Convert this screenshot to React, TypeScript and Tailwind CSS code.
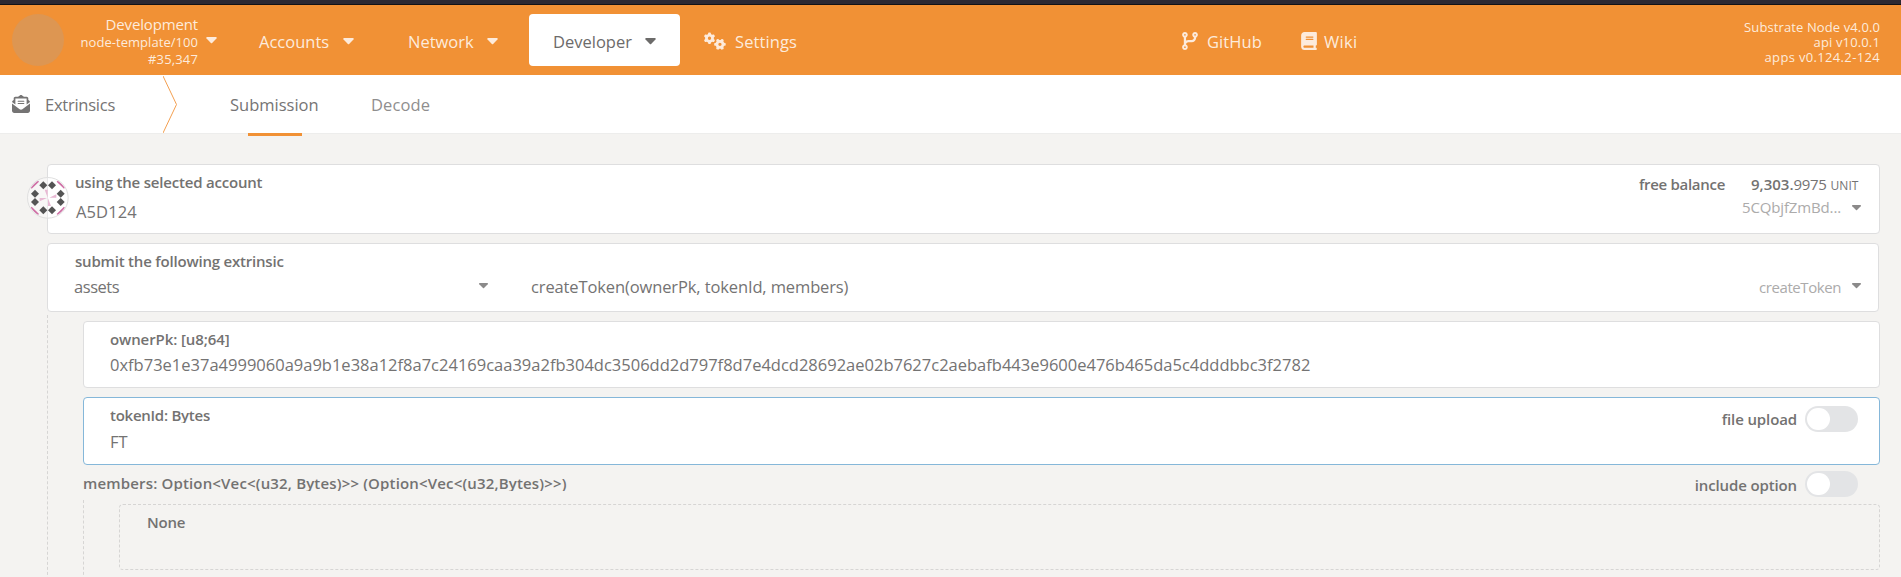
import type { ReactNode } from "react";
import { FaBook, FaCodeBranch, FaEnvelopeOpenText, FaGears } from "react-icons/fa6";

const HEX =
  "0xfb73e1e37a4999060a9a9b1e38a12f8a7c24169caa39a2fb304dc3506dd2d797f8d7e4dcd28692ae02b7627c2aebafb443e9600e476b465da5c4dddbbc3f2782";

function Caret({ className = "" }: { className?: string }) {
  return (
    <svg viewBox="0 0 12 8" className={`shrink-0 ${className}`} fill="currentColor" aria-hidden="true">
      <path d="M1 0h10c.9 0 1.3 1 .7 1.7l-5 5.1c-.4.4-1 .4-1.4 0l-5-5.1C-.3 1 .1 0 1 0z" />
    </svg>
  );
}

function Label({ className = "", children }: { className?: string; children: ReactNode }) {
  return (
    <span className={`block whitespace-nowrap text-[15px] leading-5 font-semibold text-[#737271] ${className}`}>
      {children}
    </span>
  );
}

function Value({ className = "", children }: { className?: string; children: ReactNode }) {
  return (
    <span className={`block whitespace-nowrap text-[16.5px] leading-6 text-[#747373] ${className}`}>{children}</span>
  );
}

function Toggle() {
  return (
    <span className="flex h-[26px] w-[53px] shrink-0 items-center rounded-full bg-[#e3e4e6] pl-0.5">
      <span className="h-[22px] w-[23px] rounded-full bg-white" />
    </span>
  );
}

function Identicon() {
  const diamonds = [
    [49, 25],
    [75, 25],
    [101, 50],
    [101, 75],
    [75, 100],
    [49, 100],
    [24, 75],
    [24, 50],
  ];
  return (
    <svg viewBox="0 0 126 126" className="h-[42px] w-[42px]" aria-hidden="true">
      <clipPath id="identicon-disc">
        <circle cx="62.5" cy="62.5" r="59" />
      </clipPath>
      <circle cx="62.5" cy="62.5" r="61" fill="#ffffff" fillOpacity="0.35" stroke="#dfdfdf" strokeWidth="3" />
      <g stroke="#cf70a6" strokeWidth="6" clipPath="url(#identicon-disc)">
        <path d="M12 33L34 12M91 12l22 21M12 91l22 22M91 113l22-22" />
      </g>
      <g fill="#e8b8d3">
        <path d="M53 38l9 0v24zM88 52v10H67zM72 87h-9V64zM38 73V63h22z" />
      </g>
      <g fill="#545454">
        {diamonds.map(([x, y]) => (
          <path key={`${x}-${y}`} d={`M${x} ${y - 12}l12 12-12 12-12-12z`} />
        ))}
      </g>
    </svg>
  );
}

function Header() {
  return (
    <header className="flex h-[70px] items-start bg-[#f19135] text-[16.5px] leading-6 text-[#fdebdc]">
      <div className="mt-[9px] ml-[12px] size-[52px] shrink-0 rounded-full bg-[#dd9652]" />
      <div className="mt-[9px] flex w-[134px] flex-col items-end whitespace-nowrap">
        <span className="text-[15px] leading-5 tracking-[-0.15px]">Development</span>
        <span className="text-[13px] leading-[17px] tracking-[0.05px]">node-template/100</span>
        <span className="text-[13px] leading-[17px] tracking-[0.15px]">#35,347</span>
      </div>
      <Caret className="mt-[32px] ml-2 h-[7px] w-[11px]" />

      <nav className="flex whitespace-nowrap">
        <span className="mt-[25px] ml-[42px] w-[84px]">Accounts</span>
        <Caret className="mt-[33px] h-[7px] w-[11px]" />
        <span className="mt-[25px] ml-[54px] w-[79px]">Network</span>
        <Caret className="mt-[33px] h-[7px] w-[11px]" />
        <span className="mt-[9px] ml-[31px] flex h-[52px] w-[151px] rounded bg-white text-[#6c6b6a]">
          <span className="mt-[16px] ml-[24px] w-[92px]">Developer</span>
          <Caret className="mt-[24px] h-[7px] w-[11px]" />
        </span>
        <FaGears className="mt-[27px] ml-[24px] h-[18px] w-[22px]" />
        <span className="mt-[25px] ml-[9px] tracking-[0.1px]">Settings</span>
      </nav>

      <div className="ml-auto flex w-[719px] whitespace-nowrap">
        <FaCodeBranch className="mt-[27px] h-[18px] w-4" />
        <span className="mt-[25px] ml-[9px] w-[94px] tracking-[0.1px]">GitHub</span>
        <FaBook className="mt-[27px] h-[18px] w-4" />
        <span className="mt-[25px] ml-[7px] tracking-[0.3px]">Wiki</span>
        <div className="mt-[14.5px] mr-[21px] ml-auto flex flex-col items-end text-[13px] leading-[15px]">
          <span className="tracking-[0.11px]">Substrate Node v4.0.0</span>
          <span className="tracking-[0.14px]">api v10.0.1</span>
          <span className="tracking-[0.34px]">apps v0.124.2-124</span>
        </div>
      </div>
    </header>
  );
}

function Tabs() {
  return (
    <div className="flex h-[59px] items-start border-b border-[#ededec] bg-white text-[16.5px] leading-6 whitespace-nowrap text-[#757474]">
      <FaEnvelopeOpenText className="mt-[20px] ml-[12px] size-[18px]" />
      <span className="mt-[18px] ml-[15px] w-[118px] tracking-[-0.25px]">Extrinsics</span>
      <svg viewBox="0 0 15 58" className="h-[58px] w-[15px]" fill="none" stroke="#f39f50" aria-hidden="true">
        <path d="M0 1L13.5 29.5L0 58" />
      </svg>
      <div className="relative ml-[52px]">
        <span className="mt-[18px] block w-[141px]">Submission</span>
        <span className="absolute top-[58px] left-[18px] h-[3px] w-[54px] bg-[#f19135]" />
      </div>
      <span className="mt-[18px] tracking-[0.1px] text-[#8f8e8e]">Decode</span>
    </div>
  );
}

export default function App() {
  return (
    <div className="h-[577px] w-[1901px] overflow-hidden bg-[#f4f3f1] font-['Open_Sans',sans-serif]">
      <div className="h-[5px] border-b border-[#131217] bg-[#2c2933]" />
      <Header />
      <Tabs />

      <main className="pt-[30px] pr-[21px] pl-[47px]">
        <section className="relative flex h-[70px] justify-between rounded border border-[#dededf] bg-white">
          <div className="absolute top-[12px] -left-[21px]">
            <Identicon />
          </div>
          <div className="pt-[7px] pl-[26px]">
            <Label className="pl-px tracking-[-0.2px]">using the selected account</Label>
            <Value className="mt-[8px] ml-[2px] tracking-[0.1px]">A5D124</Value>
          </div>
          <div className="pt-[9px] pr-5">
            <div className="flex justify-end">
              <Label className="mr-[26px] tracking-[-0.3px]">free balance</Label>
              <span className="flex w-[108px] items-baseline text-[15px] leading-5 whitespace-nowrap text-[#747373]">
                <span className="font-semibold text-[#737271]">9,303.</span>
                <span className="tracking-[-0.3px]">9975</span>
                <span className="ml-1 text-[12px]">UNIT</span>
              </span>
            </div>
            <div className="flex items-start justify-end pt-px text-[15px] leading-5 text-[#acabab]">
              <span className="tracking-[-0.14px]">5CQbjfZmBd...</span>
              <Caret className="mt-[8px] -mr-[2px] ml-[11px] h-[6px] w-[9px] text-[#8b8a8a]" />
            </div>
          </div>
        </section>

        <section className="mt-[9px] mr-px flex h-[69px] flex-col rounded border border-[#dededf] bg-white pt-[7px] pl-[26px]">
          <Label className="pl-px tracking-[-0.2px]">submit the following extrinsic</Label>
          <div className="mt-1 flex items-start">
            <Value className="w-[405px] tracking-[-0.45px]">assets</Value>
            <Caret className="mt-[8px] h-[6px] w-[9px] text-[#8b8a8a]" />
            <Value className="ml-[43px] tracking-[-0.12px]">createToken(ownerPk, tokenId, members)</Value>
            <span className="ml-auto text-[15px] leading-6 tracking-[-0.42px] text-[#acabab]">createToken</span>
            <Caret className="mt-[8px] mr-[17px] ml-[11px] h-[6px] w-[9px] text-[#8b8a8a]" />
          </div>
        </section>

        <div className="mt-[3px] h-[270px] border-l border-dashed border-[#d6d5d4] pt-[6px] pl-[35px]">
          <section className="h-[67px] rounded border border-[#dededf] bg-white pt-[7px] pl-[26px]">
            <Label className="h-[18px] overflow-hidden tracking-[-0.1px]">ownerPk: [u8;64]</Label>
            <Value className="mt-[6px]">{HEX}</Value>
          </section>

          <section className="mt-[9px] flex h-[68px] justify-between rounded border border-[#85b7d9] bg-white pr-[21px] pl-[26px]">
            <div className="pt-[7px]">
              <Label className="h-[18px] overflow-hidden tracking-[-0.26px]">tokenId: Bytes</Label>
              <Value className="mt-[7px]">FT</Value>
            </div>
            <div className="flex h-[26px] pt-[8px]">
              <Label className="mt-[3px] mr-2 tracking-[-0.12px]">file upload</Label>
              <Toggle />
            </div>
          </section>

          <div className="flex h-[35px] justify-between pr-[22px]">
            <Label className="mt-[8px] h-[18px] overflow-hidden tracking-[0.16px]">
              {"members: Option<Vec<(u32, Bytes)>> (Option<Vec<(u32,Bytes)>>)"}
            </Label>
            <div className="flex pt-[6px]">
              <Label className="mt-[4px] mr-2 tracking-[-0.13px]">include option</Label>
              <Toggle />
            </div>
          </div>

          <div className="h-[80px] border-l border-dashed border-[#d6d5d4] pt-[4px] pl-[35px]">
            <section className="h-[66px] rounded border border-dashed border-[#d6d5d4] pt-[7px] pl-[27px]">
              <Label className="tracking-[-0.25px]">None</Label>
            </section>
          </div>
        </div>
      </main>
    </div>
  );
}
